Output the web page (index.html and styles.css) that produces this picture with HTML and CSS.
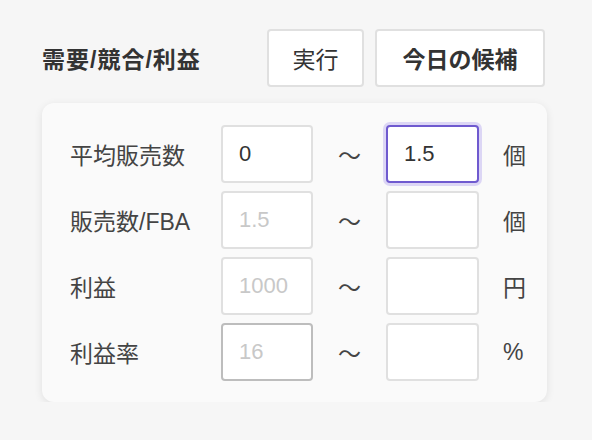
FILE: index.html
```html
<!DOCTYPE html>
<html lang="ja">
<head>
    <meta charset="UTF-8">
    <meta name="viewport" content="width=device-width, initial-scale=1.0">
    <title>需要/競合/利益</title>
    <link rel="stylesheet" href="styles.css">
</head>
<body>
    <div class="panel">
        <div class="panel-head">
            <h2>需要/競合/利益</h2>
            <div class="actions">
                <button class="btn">実行</button>
                <button class="btn btn-bold">今日の候補</button>
            </div>
        </div>
        <div class="filter-card">
            <div class="filter-row">
                <label>平均販売数</label>
                <input type="text" value="0">
                <span class="tilde">〜</span>
                <input type="text" class="focused" value="1.5">
                <span class="unit">個</span>
            </div>
            <div class="filter-row">
                <label>販売数/FBA</label>
                <input type="text" placeholder="1.5">
                <span class="tilde">〜</span>
                <input type="text">
                <span class="unit">個</span>
            </div>
            <div class="filter-row">
                <label>利益</label>
                <input type="text" placeholder="1000">
                <span class="tilde">〜</span>
                <input type="text">
                <span class="unit">円</span>
            </div>
            <div class="filter-row">
                <label>利益率</label>
                <input type="text" class="hovered" placeholder="16">
                <span class="tilde">〜</span>
                <input type="text">
                <span class="unit">%</span>
            </div>
        </div>
    </div>
</body>
</html>
```

FILE: styles.css
```css
*{
    margin:0;
    padding:0;
    box-sizing:border-box;
}
body{
    background-color:#f6f6f6;
    font-family:"Liberation Sans", "Noto Sans CJK JP", sans-serif;
    color:#333;
}
.panel{
    width:505px;
    margin-left:42px;
    padding-top:29px;
}
.panel-head{
    display:flex;
    align-items:center;
    justify-content:space-between;
    padding-right:2px;
}
.panel-head h2{
    font-size:23px;
    font-weight:bold;
    letter-spacing:1px;
    color:#333;
}
.actions{
    display:flex;
    gap:11px;
}
.btn{
    height:58px;
    background-color:#fff;
    border:2px solid #e0e0e0;
    border-radius:4px;
    font-family:inherit;
    font-size:23px;
    color:#333;
    padding:0;
    cursor:pointer;
}
.btn:first-child{
    width:97px;
}
.btn-bold{
    width:170px;
    font-weight:bold;
}
.filter-card{
    margin-top:16px;
    background-color:#fafafa;
    border-radius:12px;
    box-shadow:rgba(0, 0, 0, 0.09) 0px 2px 8px;
    padding:22px 0 21px 28px;
    display:flex;
    flex-direction:column;
    gap:8px;
}
.filter-row{
    display:grid;
    grid-template-columns:151px 92px 73px 93px 1fr;
    align-items:center;
}
.filter-row label{
    font-size:23px;
    color:#444;
}
.filter-row input{
    height:58px;
    width:100%;
    background-color:#fff;
    border:2px solid #e0e0e0;
    border-radius:4px;
    padding-left:16px;
    font-family:inherit;
    font-size:22px;
    color:#333;
    outline:none;
}
.filter-row input::placeholder{
    color:#c8c8c8;
}
.filter-row input.hovered{
    border-color:#bdbdbd;
}
.filter-row input.focused{
    border-color:#6f5acf;
    box-shadow:0 0 0 3px #dcd6f5;
}
.tilde{
    text-align:center;
    font-size:23px;
    color:#444;
}
.unit{
    margin-left:24px;
    font-size:23px;
    color:#444;
}
```
